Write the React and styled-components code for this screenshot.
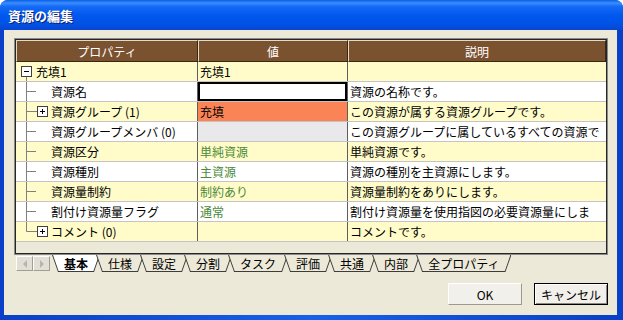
import React from 'react';
import styled, { createGlobalStyle, css } from 'styled-components';

const GlobalStyle = createGlobalStyle`
  html, body {
    margin: 0;
    padding: 0;
    background: #ffffff;
  }
  body {
    font-family: "Noto Sans CJK JP", "Noto Sans", sans-serif;
    font-size: 12px;
  }
`;

const Window = styled.div`
  width: 623px;
  height: 320px;
  display: flex;
  flex-direction: column;
  border-radius: 8px 8px 0 0;
  overflow: hidden;
  background: #0b50dc;
`;

const TitleBar = styled.div`
  flex: none;
  height: 30px;
  display: flex;
  align-items: center;
  padding-left: 8px;
  background: linear-gradient(
    to bottom,
    #0a5fe6 0%,
    #3a8dff 10%,
    #156af5 22%,
    #0058ee 50%,
    #0052e6 80%,
    #0a45cf 100%
  );
  color: #ffffff;
  font-size: 13px;
  font-weight: bold;
  text-shadow: 1px 1px 0 #0a1f73;
`;

const Frame = styled.div`
  flex: 1;
  display: flex;
  padding: 0 6px 5px 4px;
  background: linear-gradient(to right, #0a3fc8, #1660ea 50%, #0a3fc8);
`;

const Body = styled.div`
  flex: 1;
  display: flex;
  flex-direction: column;
  padding: 8px 9px 0 10px;
  background: #ece9d8;
`;

const Grid = styled.div`
  flex: none;
  height: 217px;
  box-sizing: border-box;
  display: flex;
  border: 1px solid #8a8a8a;
`;

const GridInner = styled.div`
  flex: 1;
  display: flex;
  flex-direction: column;
  border: 1px solid #262626;
  background: #ece9d8;
  overflow: hidden;
`;

const Row = styled.div`
  flex: none;
  display: grid;
  grid-template-columns: 182px 150px 1fr;
  height: ${({ header }) => (header ? 22 : 20)}px;
  box-sizing: border-box;
  ${({ header }) =>
    !header &&
    css`
      border-bottom: 1px solid #c4c4c4;
    `}
  background: ${({ tone }) => (tone === 'yellow' ? '#fffcc9' : '#ffffff')};
`;

const HeaderCell = styled.div`
  display: flex;
  align-items: center;
  justify-content: center;
  background: #7b5230;
  color: #ffffff;
  box-sizing: border-box;
  border-top: 1px solid #e6d9c4;
  border-left: 1px solid #e6d9c4;
  border-right: 1px solid #3a2612;
  border-bottom: 1px solid #3a2612;
  white-space: nowrap;
`;

const valueBackgrounds = {
  coral: '#fa8456',
  gray: '#e9e9ec',
};

const Cell = styled.div`
  display: flex;
  align-items: center;
  box-sizing: border-box;
  padding-left: ${({ pad }) => pad}px;
  border-right: ${({ divider }) => (divider ? '1px solid #5e5e5e' : 'none')};
  white-space: nowrap;
  overflow: hidden;
  color: ${({ green }) => (green ? '#4a8a3a' : '#000000')};
  background: ${({ bg }) => (bg ? valueBackgrounds[bg] : 'transparent')};
  ${({ editing }) =>
    editing &&
    css`
      background: #ffffff;
      box-shadow: inset 0 0 0 2px #000000;
    `}
`;

const Label = styled.span`
  margin-left: 1px;
`;

const Filler = styled.div`
  flex: 1;
`;

const TabStrip = styled.div`
  flex: none;
  height: 17px;
  display: flex;
  padding-left: 2px;
`;

const ScrollButton = styled.div`
  width: 17px;
  height: 15px;
  margin-top: 1px;
  box-sizing: border-box;
  display: flex;
  align-items: center;
  justify-content: center;
  background: #e2e0d6;
  border: 1px solid;
  border-color: #ffffff #a09e94 #a09e94 #ffffff;
  &::after {
    content: '';
    border-top: 4px solid transparent;
    border-bottom: 4px solid transparent;
    ${({ dir }) =>
      dir === 'left'
        ? css`
            border-right: 4px solid #b8b6ac;
          `
        : css`
            border-left: 4px solid #b8b6ac;
          `}
  }
`;

const TabList = styled.div`
  display: flex;
  margin-left: 2px;
`;

const Tab = styled.div`
  position: relative;
  height: 17px;
  display: flex;
  align-items: center;
  padding: 0 12px;
  margin-left: -4px;
  &:first-child {
    margin-left: 0;
  }
  background: #3c3c3c;
  clip-path: polygon(0 0, 100% 0, calc(100% - 6px) 100%, 6px 100%);
  font-weight: ${({ active }) => (active ? 'bold' : 'normal')};
  color: #000000;
  &::before {
    content: '';
    position: absolute;
    top: 0;
    bottom: 1px;
    left: 1px;
    right: 1px;
    background: ${({ active }) => (active ? '#ffffff' : '#ece9d8')};
    clip-path: polygon(0 0, 100% 0, calc(100% - 5.6px) 100%, 5.6px 100%);
  }
`;

const TabLabel = styled.span`
  position: relative;
  white-space: nowrap;
`;

const ButtonRow = styled.div`
  display: flex;
  justify-content: flex-end;
  gap: 12px;
  margin-top: 11px;
`;

const Button = styled.button`
  width: 74px;
  height: 22px;
  padding: 0;
  font-family: "Noto Sans CJK JP", "Noto Sans", sans-serif;
  font-size: 12px;
  color: #000000;
  background: #f1f0ea;
  border: 1px solid;
  border-color: #ffffff #9d9a8c #9d9a8c #ffffff;
  ${({ primary }) =>
    primary &&
    css`
      border-color: #000000;
      box-shadow: inset 1px 1px 0 #ffffff, inset -1px -1px 0 #8c8a80;
    `}
`;

const TreeMark = ({ root, expand, last }) => {
  if (root) {
    return (
      <svg width="19" height="19" viewBox="0 0 19 19">
        <line x1="10.5" y1="14.5" x2="10.5" y2="19" stroke="#808080" />
        <rect x="5.5" y="4.5" width="10" height="10" fill="#ffffff" stroke="#404040" />
        <line x1="8" y1="9.5" x2="13" y2="9.5" stroke="#000000" />
      </svg>
    );
  }
  return (
    <svg width="34" height="19" viewBox="0 0 34 19">
      <line x1="10.5" y1="0" x2="10.5" y2={last ? 9.5 : 19} stroke="#808080" />
      <line x1="10.5" y1="9.5" x2={expand ? 21.5 : 20} y2="9.5" stroke="#808080" />
      {expand && (
        <>
          <rect x="21.5" y="4.5" width="10" height="10" fill="#ffffff" stroke="#404040" />
          <line x1="24" y1="9.5" x2="29" y2="9.5" stroke="#000000" />
          <line x1="26.5" y1="7" x2="26.5" y2="12" stroke="#000000" />
        </>
      )}
    </svg>
  );
};

// descriptions hold only what fits in the column, as the dialog shows them
const rows = [
  { label: '充填1', root: true, value: '充填1', desc: '', tone: 'yellow' },
  { label: '資源名', value: '', editing: true, desc: '資源の名称です。', tone: 'white' },
  { label: '資源グループ (1)', expand: true, value: '充填', bg: 'coral', desc: 'この資源が属する資源グループです。', tone: 'yellow' },
  { label: '資源グループメンバ (0)', value: '', bg: 'gray', desc: 'この資源グループに属しているすべての資源で', tone: 'white' },
  { label: '資源区分', value: '単純資源', green: true, desc: '単純資源です。', tone: 'yellow' },
  { label: '資源種別', value: '主資源', green: true, desc: '資源の種別を主資源にします。', tone: 'white' },
  { label: '資源量制約', value: '制約あり', green: true, desc: '資源量制約をありにします。', tone: 'yellow' },
  { label: '割付け資源量フラグ', value: '通常', green: true, desc: '割付け資源量を使用指図の必要資源量にしま', tone: 'white' },
  { label: 'コメント (0)', expand: true, last: true, value: '', desc: 'コメントです。', tone: 'yellow' },
];

const tabs = ['基本', '仕様', '設定', '分割', 'タスク', '評価', '共通', '内部', '全プロパティ'];

const App = () => (
  <>
    <GlobalStyle />
    <Window>
      <TitleBar>資源の編集</TitleBar>
      <Frame>
        <Body>
          <Grid>
            <GridInner>
              <Row header>
                <HeaderCell>プロパティ</HeaderCell>
                <HeaderCell>値</HeaderCell>
                <HeaderCell>説明</HeaderCell>
              </Row>
              {rows.map((row) => (
                <Row key={row.label} tone={row.tone}>
                  <Cell divider pad={0}>
                    <TreeMark root={row.root} expand={row.expand} last={row.last} />
                    <Label>{row.label}</Label>
                  </Cell>
                  <Cell divider pad={2} green={row.green} bg={row.bg} editing={row.editing}>
                    {row.value}
                  </Cell>
                  <Cell pad={2}>{row.desc}</Cell>
                </Row>
              ))}
              <Filler />
            </GridInner>
          </Grid>
          <TabStrip>
            <ScrollButton dir="left" />
            <ScrollButton dir="right" />
            <TabList>
              {tabs.map((name, i) => (
                <Tab key={name} active={i === 0}>
                  <TabLabel>{name}</TabLabel>
                </Tab>
              ))}
            </TabList>
          </TabStrip>
          <ButtonRow>
            <Button>OK</Button>
            <Button primary>キャンセル</Button>
          </ButtonRow>
        </Body>
      </Frame>
    </Window>
  </>
);

export default App;
